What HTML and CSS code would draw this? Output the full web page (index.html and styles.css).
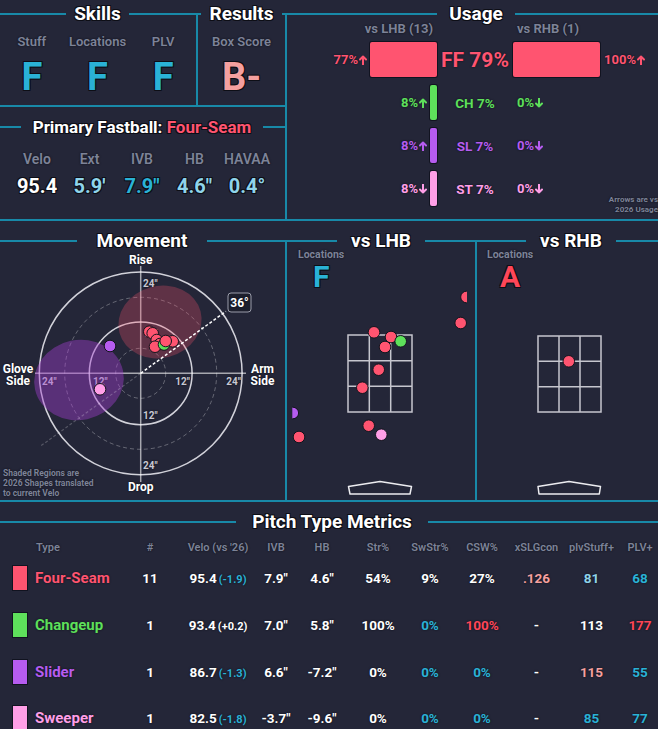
FILE: index.html
```html
<!DOCTYPE html>
<html lang="en">
<head>
<meta charset="utf-8">
<title>Pitcher Report</title>
<link rel="stylesheet" href="styles.css">
</head>
<body>
<div class="page">
  <div class="top">
    <div class="leftcol">
      <div class="row1">
        <fieldset class="panel skills">
          <legend class="t-skills">Skills</legend>
          <div class="grades g3">
            <div class="gcell"><span class="lbl">Stuff</span><span class="grade teal">F</span></div>
            <div class="gcell"><span class="lbl">Locations</span><span class="grade teal">F</span></div>
            <div class="gcell"><span class="lbl">PLV</span><span class="grade teal">F</span></div>
          </div>
        </fieldset>
        <fieldset class="panel results">
          <legend class="t-results">Results</legend>
          <div class="grades g1">
            <div class="gcell"><span class="lbl">Box Score</span><span class="grade salmon">B-</span></div>
          </div>
        </fieldset>
      </div>
      <fieldset class="panel fastball">
        <legend class="t-fb">Primary Fastball: <span class="red">Four-Seam</span></legend>
        <div class="fb">
          <div class="fbc"><span class="fbl">Velo</span><span class="fbv">95.4</span></div>
          <div class="fbc"><span class="fbl">Ext</span><span class="fbv lblue">5.9'</span></div>
          <div class="fbc"><span class="fbl">IVB</span><span class="fbv teal">7.9"</span></div>
          <div class="fbc"><span class="fbl">HB</span><span class="fbv lblue">4.6"</span></div>
          <div class="fbc"><span class="fbl">HAVAA</span><span class="fbv lblue">0.4°</span></div>
        </div>
      </fieldset>
    </div>
    <fieldset class="panel usage">
      <legend class="t-usage">Usage</legend>
      <div class="uhead"><span class="l">vs LHB (13)</span><span></span><span class="r">vs RHB (1)</span></div>
      <div class="urow c-ff">
        <div class="l"><span class="pct">77%<svg class="arr" viewBox="0 0 8 10"><path d="M4 9.5V1.5M1 4.5L4 1.5L7 4.5"/></svg></span><span class="bar" style="width:67px"></span></div>
        <div class="c big">FF 79%</div>
        <div class="r"><span class="bar" style="width:87px"></span><span class="pct">100%<svg class="arr" viewBox="0 0 8 10"><path d="M4 9.5V1.5M1 4.5L4 1.5L7 4.5"/></svg></span></div>
      </div>
      <div class="urow c-ch">
        <div class="l"><span class="pct">8%<svg class="arr" viewBox="0 0 8 10"><path d="M4 9.5V1.5M1 4.5L4 1.5L7 4.5"/></svg></span><span class="bar" style="width:7px"></span></div>
        <div class="c">CH 7%</div>
        <div class="r"><span class="bar zero"></span><span class="pct">0%<svg class="arr" viewBox="0 0 8 10"><path d="M4 0.5V8.5M1 5.5L4 8.5L7 5.5"/></svg></span></div>
      </div>
      <div class="urow c-sl">
        <div class="l"><span class="pct">8%<svg class="arr" viewBox="0 0 8 10"><path d="M4 9.5V1.5M1 4.5L4 1.5L7 4.5"/></svg></span><span class="bar" style="width:7px"></span></div>
        <div class="c">SL 7%</div>
        <div class="r"><span class="bar zero"></span><span class="pct">0%<svg class="arr" viewBox="0 0 8 10"><path d="M4 0.5V8.5M1 5.5L4 8.5L7 5.5"/></svg></span></div>
      </div>
      <div class="urow c-st">
        <div class="l"><span class="pct">8%<svg class="arr" viewBox="0 0 8 10"><path d="M4 0.5V8.5M1 5.5L4 8.5L7 5.5"/></svg></span><span class="bar" style="width:7px"></span></div>
        <div class="c">ST 7%</div>
        <div class="r"><span class="bar zero"></span><span class="pct">0%<svg class="arr" viewBox="0 0 8 10"><path d="M4 0.5V8.5M1 5.5L4 8.5L7 5.5"/></svg></span></div>
      </div>
      <div class="note">Arrows are vs<br>2026 Usage</div>
    </fieldset>
  </div>

  <div class="mid">
    <fieldset class="panel movement">
      <legend class="t-move">Movement</legend>
      <svg class="chart" width="286" height="247" viewBox="-1 253 286 247">
        <circle cx="140.7" cy="373.3" r="25" class="dash"/>
        <circle cx="140.7" cy="373.3" r="76" class="dash"/>
        <circle cx="140.7" cy="373.3" r="51.4" class="ring"/>
        <circle cx="140.7" cy="373.3" r="101.4" class="ring"/>
        <line x1="140.7" y1="266" x2="140.7" y2="482" class="axis"/>
        <line x1="35" y1="373.3" x2="246" y2="373.3" class="axis"/>
        <text x="143" y="287" class="tick">24"</text>
        <text x="143" y="337" class="tick">12"</text>
        <text x="143" y="419" class="tick">12"</text>
        <text x="143" y="469" class="tick">24"</text>
        <text x="42" y="385" class="tick">24"</text>
        <text x="93" y="385" class="tick">12"</text>
        <text x="190" y="385" class="tick" text-anchor="end">12"</text>
        <text x="241" y="385" class="tick" text-anchor="end">24"</text>
        <ellipse cx="160" cy="322" rx="42" ry="36" transform="rotate(-15 160 322)" class="reg-ff"/>
        <ellipse cx="79" cy="380" rx="45" ry="40" transform="rotate(-12 79 380)" class="reg-sl"/>
        <line x1="140.7" y1="373.3" x2="41.2" y2="445.6" class="armfaint"/>
        <line x1="140.7" y1="373.3" x2="226" y2="311.3" class="armline"/>
        <rect x="228" y="293" width="23" height="19" rx="3" class="anglebox"/>
        <text x="239.5" y="307" class="anglet" text-anchor="middle">36°</text>
        <circle cx="149.3" cy="331.7" r="5.8" class="d ff"/>
        <circle cx="152.7" cy="333.3" r="5.8" class="d ff"/>
        <circle cx="156.7" cy="340" r="5.8" class="d ff"/>
        <circle cx="160" cy="344" r="5.8" class="d ff"/>
        <circle cx="155" cy="346.7" r="5.8" class="d ff"/>
        <circle cx="172.7" cy="341.3" r="5.8" class="d ff"/>
        <circle cx="164" cy="344.5" r="5.8" class="d ch"/>
        <circle cx="165.7" cy="341" r="5.8" class="d ff"/>
        <circle cx="110" cy="346" r="5.8" class="d sl"/>
        <circle cx="100" cy="389.3" r="5.8" class="d st"/>
        <text x="140.7" y="264" class="axl" text-anchor="middle">Rise</text>
        <text x="140.7" y="491" class="axl" text-anchor="middle">Drop</text>
        <text x="18" y="372.5" class="axl" text-anchor="middle">Glove</text>
        <text x="18" y="385" class="axl" text-anchor="middle">Side</text>
        <text x="262.5" y="372.5" class="axl" text-anchor="middle">Arm</text>
        <text x="262.5" y="385" class="axl" text-anchor="middle">Side</text>
        <text x="3" y="476" class="foot">Shaded Regions are</text>
        <text x="3" y="486" class="foot">2026 Shapes translated</text>
        <text x="3" y="496" class="foot">to current Velo</text>
      </svg>
    </fieldset>
    <fieldset class="panel loc lhb">
      <legend class="t-lhb">vs LHB</legend>
      <div class="lochead"><span class="ll">Locations</span><span class="lg teal">F</span></div>
      <svg class="plot" width="188" height="212" viewBox="287 288 188 212">
        <defs><clipPath id="clipL"><rect x="292.3" y="288" width="174.7" height="212"/></clipPath></defs>
        <rect x="348" y="335" width="64" height="77" class="zone"/>
        <line x1="369.3" y1="335" x2="369.3" y2="412" class="zone"/>
        <line x1="390.7" y1="335" x2="390.7" y2="412" class="zone"/>
        <line x1="348" y1="360.7" x2="412" y2="360.7" class="zone"/>
        <line x1="348" y1="386.3" x2="412" y2="386.3" class="zone"/>
        <path d="M348.5 486.5 L380 481.5 L411.5 486.5 L410 494 L350 494 Z" class="plate"/>
        <g clip-path="url(#clipL)">
          <circle cx="374" cy="332.3" r="5.8" class="d ff"/>
          <circle cx="391" cy="337" r="5.8" class="d ff"/>
          <circle cx="385" cy="347" r="5.8" class="d ff"/>
          <circle cx="400.7" cy="341.3" r="5.8" class="d ch"/>
          <circle cx="378.7" cy="369.7" r="5.8" class="d ff"/>
          <circle cx="362.3" cy="387.7" r="5.8" class="d ff"/>
          <circle cx="368.7" cy="425.7" r="5.8" class="d ff"/>
          <circle cx="381.3" cy="434.7" r="5.8" class="d st"/>
          <circle cx="299" cy="437" r="5.8" class="d ff"/>
          <circle cx="460.7" cy="323" r="5.8" class="d ff"/>
          <circle cx="466.5" cy="297" r="5.8" class="d ff"/>
          <circle cx="292.8" cy="413" r="5.8" class="d sl"/>
        </g>
      </svg>
    </fieldset>
    <fieldset class="panel loc rhb">
      <legend class="t-rhb">vs RHB</legend>
      <div class="lochead r"><span class="ll">Locations</span><span class="lg red2">A</span></div>
      <svg class="plot" width="188" height="212" viewBox="477 288 188 212">
        <rect x="538" y="336" width="63" height="76" class="zone"/>
        <line x1="559" y1="336" x2="559" y2="412" class="zone"/>
        <line x1="580" y1="336" x2="580" y2="412" class="zone"/>
        <line x1="538" y1="361.3" x2="601" y2="361.3" class="zone"/>
        <line x1="538" y1="386.7" x2="601" y2="386.7" class="zone"/>
        <path d="M538 486.5 L569 481.5 L600.5 486.5 L599.3 494 L539 494 Z" class="plate"/>
        <circle cx="568.8" cy="361.3" r="5.8" class="d ff"/>
      </svg>
    </fieldset>
  </div>

  <fieldset class="panel metrics">
    <legend class="t-met">Pitch Type Metrics</legend>
    <div class="mt">
      <div class="tr th">
        <span></span><span class="name">Type</span><span class="c">#</span><span class="c">Velo (vs '26)</span><span class="c">IVB</span><span class="c">HB</span><span class="c">Str%</span><span class="c">SwStr%</span><span class="c">CSW%</span><span class="c">xSLGcon</span><span class="c">plvStuff+</span><span class="c">PLV+</span>
      </div>
      <div class="tr td">
        <span class="sw bg-ff"></span><span class="name red">Four-Seam</span><span class="c">11</span><span class="c">95.4<small class="teal">(-1.9)</small></span><span class="c">7.9"</span><span class="c">4.6"</span><span class="c">54%</span><span class="c">9%</span><span class="c">27%</span><span class="c salmon">.126</span><span class="c lblue">81</span><span class="c teal">68</span>
      </div>
      <div class="tr td">
        <span class="sw bg-ch"></span><span class="name green">Changeup</span><span class="c">1</span><span class="c">93.4<small>(+0.2)</small></span><span class="c">7.0"</span><span class="c">5.8"</span><span class="c">100%</span><span class="c teal">0%</span><span class="c red2">100%</span><span class="c">-</span><span class="c">113</span><span class="c red2">177</span>
      </div>
      <div class="tr td">
        <span class="sw bg-sl"></span><span class="name purple">Slider</span><span class="c">1</span><span class="c">86.7<small class="teal">(-1.3)</small></span><span class="c">6.6"</span><span class="c">-7.2"</span><span class="c">0%</span><span class="c teal">0%</span><span class="c teal">0%</span><span class="c">-</span><span class="c salmon">115</span><span class="c teal">55</span>
      </div>
      <div class="tr td last">
        <span class="sw bg-st"></span><span class="name pink">Sweeper</span><span class="c">1</span><span class="c">82.5<small class="teal">(-1.8)</small></span><span class="c">-3.7"</span><span class="c">-9.6"</span><span class="c">0%</span><span class="c teal">0%</span><span class="c teal">0%</span><span class="c">-</span><span class="c teal">85</span><span class="c teal">77</span>
      </div>
    </div>
  </fieldset>
</div>
</body>
</html>
```
FILE: styles.css
```css
* { box-sizing: border-box; }
html, body { margin: 0; }
body {
  background: #242638;
  color: #ffffff;
  font-family: Roboto, "Liberation Sans", sans-serif;
  font-weight: 700;
  width: 658px;
  height: 729px;
  overflow: hidden;
  text-shadow: 0 0 2px #0c0d15;
}
.page { width: 670px; margin-left: -3px; padding-top: 2px; }

.panel {
  margin: 0;
  padding: 0;
  border: 2px solid #1889a8;
  min-width: 0;
  position: relative;
}
.panel > legend {
  margin: 0 auto;
  padding: 0 8px;
  font-size: 19px;
  line-height: 24px;
  font-weight: 700;
  text-shadow: 1px 1px 0 #0d0e16, -1px -1px 0 #0d0e16, 1px -1px 0 #0d0e16, -1px 1px 0 #0d0e16;
}
.t-usage { padding: 0 12px !important; }
.t-move { padding: 0 20px !important; }
.t-lhb, .t-rhb { padding: 0 14px !important; }
.t-met { padding: 0 16px !important; }
.panel > legend.t-fb { font-size: 17px; line-height: 22px; padding: 0 12px; }

/* colours */
.teal { color: #2ab2d6; }
.lblue { color: #8fd4ea; }
.salmon { color: #f5a09f; }
.red { color: #ff5470; }
.red2 { color: #ff4658; }
.green { color: #5ee05b; }
.purple { color: #b65cf0; }
.pink { color: #ff9fe7; }

/* top row */
.top { display: flex; align-items: flex-start; }
.leftcol { width: 290px; flex: none; }
.row1 { display: flex; }
.skills { width: 201px; height: 105px; }
.results { width: 91px; height: 105px; margin-left: -2px; }
.fastball { width: 290px; height: 105px; margin-top: 9px; }
.usage { width: 382px; height: 219px; margin-left: -2px; flex: none; }

.grades { display: grid; padding-top: 7.5px; }
.g3 { grid-template-columns: repeat(3, 1fr); }
.g1 { grid-template-columns: 1fr; }
.gcell { display: flex; flex-direction: column; align-items: center; }
.lbl { font-size: 13px; line-height: 16px; color: #7d8398; font-weight: 600; }
.grade {
  font-size: 38px;
  line-height: 40px;
  margin-top: 7px;
  text-shadow: 1px 1px 0 #0d0e16, -1px -1px 0 #0d0e16, 1px -1px 0 #0d0e16, -1px 1px 0 #0d0e16;
}

.fb { display: grid; grid-template-columns: repeat(5, 52.5px); justify-content: center; padding-top: 11.5px; }
.fbc { display: flex; flex-direction: column; align-items: center; }
.fbl { font-size: 14px; line-height: 18px; color: #7d8398; font-weight: 600; }
.fbv {
  font-size: 20px;
  line-height: 24px;
  margin-top: 6.5px;
  text-shadow: 1px 1px 0 #0d0e16, -1px -1px 0 #0d0e16, 1px -1px 0 #0d0e16, -1px 1px 0 #0d0e16;
}

/* usage */
.uhead {
  display: grid;
  grid-template-columns: 150px 76px 152px;
  margin: -5px 0 5px;
  font-size: 13px;
  line-height: 16px;
  color: #7d8398;
}
.uhead .l { text-align: right; padding-right: 4px; }
.uhead .r { padding-left: 4px; }
.urow {
  display: grid;
  grid-template-columns: 150px 76px 152px;
  height: 35px;
  align-items: center;
  margin-bottom: 8px;
}
.urow .l { display: flex; justify-content: flex-end; align-items: center; gap: 3px; height: 100%; }
.urow .r { display: flex; align-items: center; gap: 4px; height: 100%; }
.urow .c { text-align: center; font-size: 13.5px; }
.urow .c.big { font-size: 21px; }
.pct { font-size: 13px; display: inline-flex; align-items: center; }
.arr {
  width: 8px;
  height: 10px;
  margin-left: 1px;
  fill: none;
  stroke: currentColor;
  stroke-width: 2;
  stroke-linecap: round;
  stroke-linejoin: round;
}
.bar { height: 100%; border-radius: 2px; box-shadow: 0 0 0 1px #111320; }
.bar.zero { width: 0; box-shadow: none; }
.c-ff { color: #ff5470; }
.c-ff .bar { background: #ff5470; }
.c-ch { color: #5ee05b; }
.c-ch .bar { background: #5ee05b; }
.c-sl { color: #b65cf0; }
.c-sl .bar { background: #b65cf0; }
.c-st { color: #ff9fe7; }
.c-st .bar { background: #ff9fe7; }
.note {
  position: absolute;
  right: 7px;
  bottom: 4px;
  font-size: 8px;
  line-height: 10px;
  text-align: right;
  color: #7d8398;
}

/* middle row */
.mid { display: flex; margin-top: 8px; }
.movement { width: 290px; height: 273px; flex: none; }
.loc { width: 192px; height: 273px; margin-left: -2px; flex: none; }
.chart, .plot { display: block; }

.dash { fill: none; stroke: rgba(255,255,255,0.3); stroke-width: 1; stroke-dasharray: 4 3; }
.ring { fill: none; stroke: #d2d2da; stroke-width: 1.5; }
.axis { stroke: rgba(255,255,255,0.6); stroke-width: 1.5; }
.tick { font-size: 10px; fill: #c8c8d2; font-weight: 700; }
.axl { font-size: 12px; fill: #ffffff; font-weight: 700; }
.foot { font-size: 8.5px; fill: #7d8398; font-weight: 700; }
.reg-ff { fill: #ff5470; fill-opacity: 0.27; }
.reg-sl { fill: #a43fd2; fill-opacity: 0.42; }
.armline { stroke: #ffffff; stroke-width: 1.5; stroke-dasharray: 3 2; }
.armfaint { stroke: rgba(255,255,255,0.22); stroke-width: 1.2; stroke-dasharray: 3 2; }
.anglebox { fill: #1d1f2d; stroke: #9a9caa; stroke-width: 1; }
.anglet { font-size: 12px; fill: #ffffff; font-weight: 700; }
.d { stroke: #14151e; stroke-width: 1; }
.d.ff { fill: #ff5470; }
.d.ch { fill: #5ee05b; }
.d.sl { fill: #b65cf0; }
.d.st { fill: #ff9fe7; }

.lochead {
  display: flex;
  flex-direction: column;
  align-items: center;
  width: max-content;
  height: 40px;
  margin: -5px 0 0 11px;
}
.lochead.r { margin-left: 10px; }
.ll { font-size: 10.5px; line-height: 13px; color: #7d8398; }
.lg {
  font-size: 30px;
  line-height: 30px;
  margin-top: 1px;
  text-shadow: 1px 1px 0 #0d0e16, -1px -1px 0 #0d0e16, 1px -1px 0 #0d0e16, -1px 1px 0 #0d0e16;
}
.zone { fill: none; stroke: #c6c6ce; stroke-width: 1.5; }
.plate { fill: none; stroke: #ececf0; stroke-width: 1.5; stroke-linejoin: round; }

/* metrics */
.metrics { width: 670px; margin-top: 8px; border-bottom: 0; }
.mt { padding: 5px 0 0 14px; }
.tr {
  display: grid;
  grid-template-columns: 14px 89px 68px 68px 48px 44px 68px 36px 68px 41px 69px 28px;
  align-items: center;
}
.th { height: 16px; font-size: 11px; color: #7d8398; font-weight: 600; }
.td { height: 46.67px; font-size: 13.5px; }
.td.last { height: 34px; padding-top: 11.3px; }
.tr .c { display: flex; justify-content: center; align-items: baseline; white-space: nowrap; }
.tr .name { padding-left: 8px; white-space: nowrap; }
.td .name { font-size: 15px; }
.th .name { padding-left: 9px; }
.tr small { font-size: 11px; margin-left: 2px; }
.sw { width: 14px; height: 24px; box-shadow: 0 0 0 1px #111320; }
.bg-ff { background: #ff5470; }
.bg-ch { background: #5ee05b; }
.bg-sl { background: #b65cf0; }
.bg-st { background: #ff9fe7; }
```
